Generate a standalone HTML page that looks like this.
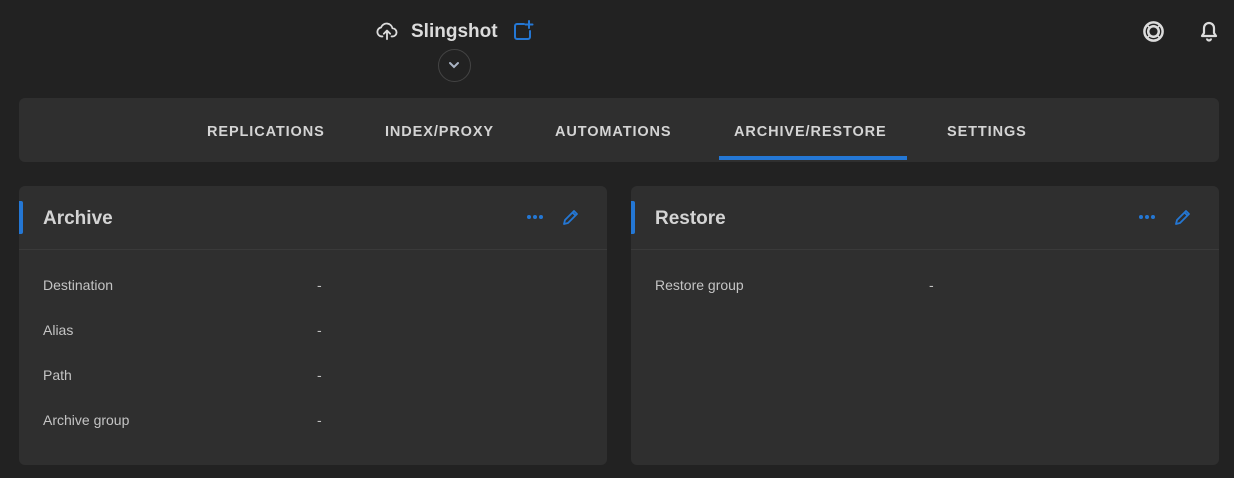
<!DOCTYPE html>
<html><head><style>
body{margin:0;width:1234px;height:478px;background:#222222;font-family:"Liberation Sans",sans-serif;position:relative;overflow:hidden;color:#d0d0d0}
.abs{position:absolute}
.nav{left:19px;top:98px;width:1200px;height:64px;background:#2f2f2f;border-radius:6px}
.tab{position:absolute;top:26px;font-size:14.5px;font-weight:bold;letter-spacing:0.9px;color:#d4d4d4}
.card{top:186px;width:588px;height:279px;background:#2f2f2f;border-radius:6px}
.card .bar{position:absolute;left:0;top:15px;width:4px;height:33px;background:#2477d4;border-radius:0 2px 2px 0}
.card h2{position:absolute;left:24px;top:22px;margin:0;font-size:19px;font-weight:bold;color:#d4d4d4}
.card .sep{position:absolute;left:0;right:0;top:63px;height:1px;background:#3a3a3a}
.row{position:absolute;left:24px;font-size:14px;color:#c4c4c4}
.val{position:absolute;left:298px;font-size:14px;color:#c4c4c4}
</style></head><body>
<svg class="abs" style="left:376px;top:21px" width="22" height="20" viewBox="0 0 24 22" fill="none" stroke="#dcdcdc" stroke-width="2" stroke-linecap="round" stroke-linejoin="round"><path d="M7 17H6a5 5 0 0 1-.5-9.9A6.5 6.5 0 0 1 18 8a4.5 4.5 0 0 1 0 9h-1"/><path d="M12 20v-9M8.5 14L12 10.5 15.5 14"/></svg>
<div class="abs" style="left:411px;top:21px;font-size:19px;font-weight:bold;color:#dcdcdc">Slingshot</div>
<svg class="abs" style="left:512px;top:20px" width="22" height="22" viewBox="0 0 22 22" fill="none" stroke="#2477d4" stroke-width="2" stroke-linecap="round"><path d="M12 4H5a2 2 0 0 0-2 2v11a2 2 0 0 0 2 2h11a2 2 0 0 0 2-2v-6"/><path d="M17 1v7M13.5 4.5h7"/></svg>
<div class="abs" style="left:438px;top:49px;width:31px;height:31px;border:1px solid #444;border-radius:50%"></div>
<svg class="abs" style="left:448px;top:60px" width="12" height="10" viewBox="0 0 12 10" fill="none" stroke="#aab4c4" stroke-width="2" stroke-linecap="round"><path d="M2 3l4 4 4-4"/></svg>
<svg class="abs" style="left:1142px;top:20px" width="23" height="23" viewBox="0 0 24 24" fill="none" stroke="#dcdcdc" stroke-width="2.6"><circle cx="12" cy="12" r="9.5"/><circle cx="12" cy="12" r="5.5"/><path d="M5 5l3.5 3.5M19 5l-3.5 3.5M5 19l3.5-3.5M19 19l-3.5-3.5" stroke-width="1.6"/></svg>
<svg class="abs" style="left:1199px;top:20px" width="20" height="22" viewBox="0 0 20 22" fill="none" stroke="#dcdcdc" stroke-width="2.2" stroke-linejoin="round"><path d="M3 16h14l-2-3V8a5 5 0 0 0-10 0v5z"/><path d="M8 18.5a2 2 0 0 0 4 0"/></svg>
<div class="abs nav">
<div class="tab" style="left:188px">REPLICATIONS</div>
<div class="tab" style="left:366px">INDEX/PROXY</div>
<div class="tab" style="left:536px">AUTOMATIONS</div>
<div class="tab" style="left:715px">ARCHIVE/RESTORE</div>
<div class="tab" style="left:928px">SETTINGS</div>
<div style="position:absolute;left:700px;top:58px;width:188px;height:4px;background:#2477d4"></div>
</div>
<div class="abs card" style="left:19px">
<div class="bar"></div><h2>Archive</h2>
<svg class="abs" style="left:507px;top:28px" width="18" height="6"><circle cx="3" cy="3" r="2" fill="#2477d4"/><circle cx="9" cy="3" r="2" fill="#2477d4"/><circle cx="15" cy="3" r="2" fill="#2477d4"/></svg>
<svg class="abs" style="left:543px;top:22px" width="18" height="18" viewBox="0 0 18 18" fill="none" stroke="#2477d4" stroke-width="1.8" stroke-linejoin="round"><path d="M2 16l1-4L12 3l3 3-9 9z M10.5 4.5l3 3"/></svg>
<div class="sep"></div>
<div class="row" style="top:91px">Destination</div><div class="val" style="top:91px">-</div>
<div class="row" style="top:136px">Alias</div><div class="val" style="top:136px">-</div>
<div class="row" style="top:181px">Path</div><div class="val" style="top:181px">-</div>
<div class="row" style="top:226px">Archive group</div><div class="val" style="top:226px">-</div>
</div>
<div class="abs card" style="left:631px">
<div class="bar"></div><h2>Restore</h2>
<svg class="abs" style="left:507px;top:28px" width="18" height="6"><circle cx="3" cy="3" r="2" fill="#2477d4"/><circle cx="9" cy="3" r="2" fill="#2477d4"/><circle cx="15" cy="3" r="2" fill="#2477d4"/></svg>
<svg class="abs" style="left:543px;top:22px" width="18" height="18" viewBox="0 0 18 18" fill="none" stroke="#2477d4" stroke-width="1.8" stroke-linejoin="round"><path d="M2 16l1-4L12 3l3 3-9 9z M10.5 4.5l3 3"/></svg>
<div class="sep"></div>
<div class="row" style="top:91px">Restore group</div><div class="val" style="top:91px">-</div>
</div>
</body></html>
